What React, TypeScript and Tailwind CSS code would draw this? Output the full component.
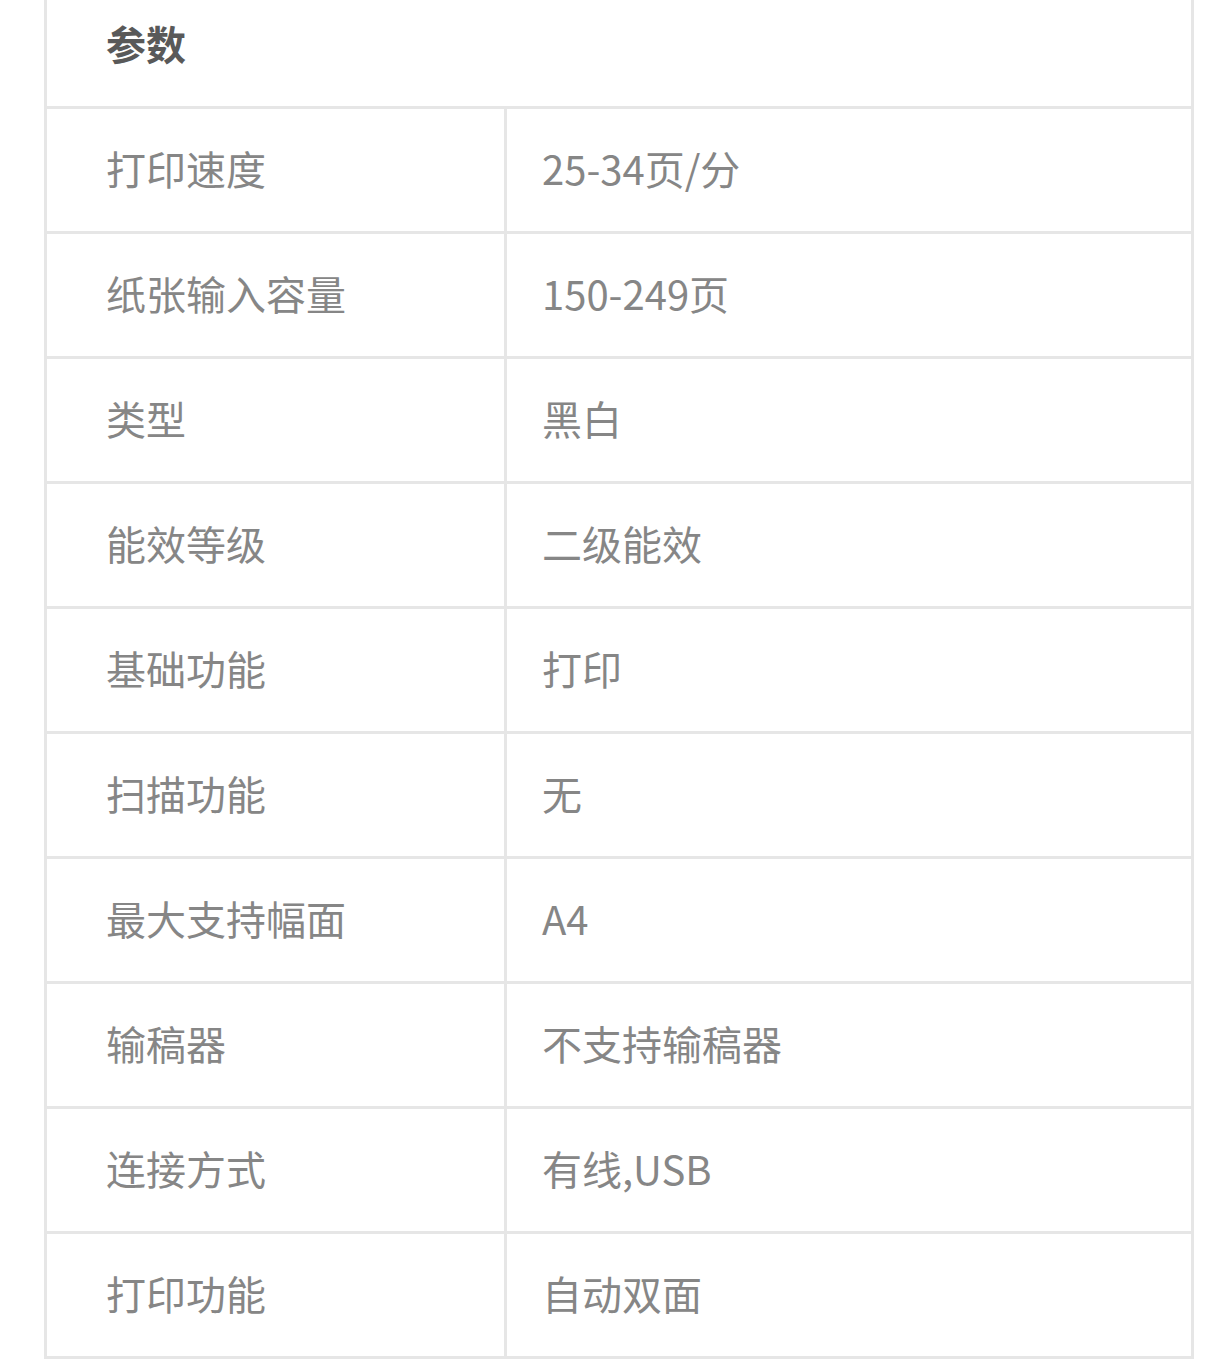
import React from "react";

const rows: [string, string][] = [
  ["打印速度", "25-34页/分"],
  ["纸张输入容量", "150-249页"],
  ["类型", "黑白"],
  ["能效等级", "二级能效"],
  ["基础功能", "打印"],
  ["扫描功能", "无"],
  ["最大支持幅面", "A4"],
  ["输稿器", "不支持输稿器"],
  ["连接方式", "有线,USB"],
  ["打印功能", "自动双面"],
];

export default function App() {
  return (
    <div
      className="w-[1225px] h-[1369px] bg-white overflow-hidden"
      style={{ fontFamily: '"Noto Sans CJK SC", "Noto Sans", sans-serif' }}
    >
      <div className="ml-[44px] w-[1150px] border-x-[3px] border-b-[3px] border-[#e6e6e6]">
        <div className="h-[106px] pl-[59px] pt-[17px] text-[40px] leading-[52px] font-bold text-[#595959]">
          参数
        </div>
        {rows.map(([k, v]) => (
          <div key={k} className="flex h-[125px] border-t-[3px] border-[#e6e6e6]">
            <div className="w-[457px] flex items-center pl-[59px] pb-[5px] text-[40px] text-[#868686]">
              {k}
            </div>
            <div className="flex-1 flex items-center pl-[35px] pb-[5px] border-l-[3px] border-[#e6e6e6] text-[40px] text-[#868686]">
              {v}
            </div>
          </div>
        ))}
      </div>
    </div>
  );
}
